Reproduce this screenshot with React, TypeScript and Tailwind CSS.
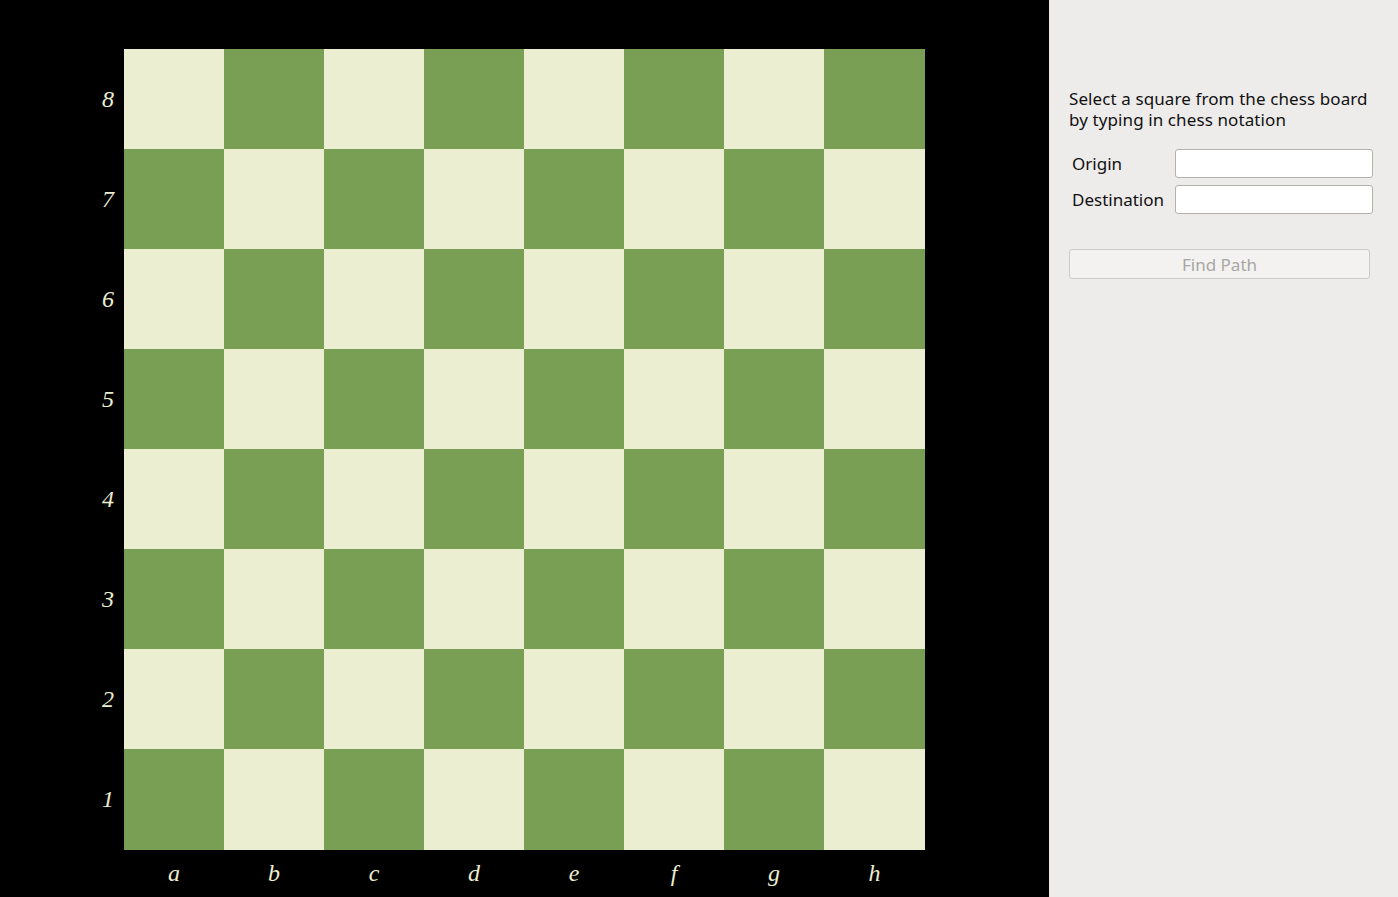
const ranks = ["8", "7", "6", "5", "4", "3", "2", "1"];
const files = ["a", "b", "c", "d", "e", "f", "g", "h"];

function Board() {
  return (
    <div className="grid grid-cols-[repeat(7,100px)_101px] grid-rows-[repeat(7,100px)_101px] w-[801px] h-[801px]">
      {ranks.map((r, ri) =>
        files.map((f, fi) => (
          <div
            key={f + r}
            className={(ri + fi) % 2 === 0 ? "bg-[#ebeed1]" : "bg-[#799f55]"}
          />
        ))
      )}
    </div>
  );
}

export default function App() {
  return (
    <div className="flex w-[1398px] h-[897px] overflow-hidden">
      {/* Board area */}
      <div className="w-[1049px] h-full bg-black pt-[49px]">
        <div className="grid grid-cols-[124px_801px] font-['Liberation_Serif',serif] italic text-[#ebeed1] text-[24px]">
          <div className="flex flex-col">
            {ranks.map((r) => (
              <div key={r} className="h-[100px] flex items-center justify-end pr-[10px]">
                {r}
              </div>
            ))}
          </div>
          <Board />
          <div />
          <div className="grid grid-cols-[repeat(7,100px)_101px] pt-[6px]">
            {files.map((f) => (
              <div key={f} className="text-center leading-[34px]">
                {f}
              </div>
            ))}
          </div>
        </div>
      </div>

      {/* Side panel */}
      <div className="flex-1 h-full bg-[#edeceb] pl-[20px] pr-[25px] pt-[88px] font-['Noto_Sans',sans-serif] text-[17px] text-[#111]">
        <p className="leading-[21px] tracking-[0.1px]">
          Select a square from the chess board by typing in chess notation
        </p>
        <div className="mt-[19px] grid grid-cols-[106px_198px] gap-y-[7px] items-center">
          <label className="pl-[3px] leading-[29px]">Origin</label>
          <input className="h-[29px] bg-white border border-[#b3b1ae] rounded-[3px] outline-none" />
          <label className="pl-[3px] leading-[29px]">Destination</label>
          <input className="h-[29px] bg-white border border-[#b3b1ae] rounded-[3px] outline-none" />
        </div>
        <button
          disabled
          className="mt-[35px] w-[301px] h-[30px] border border-[#cdcbc8] rounded-[3px] bg-[#f3f2f1] text-[#a9a7a4] text-[17px] leading-none"
        >
          Find Path
        </button>
      </div>
    </div>
  );
}
